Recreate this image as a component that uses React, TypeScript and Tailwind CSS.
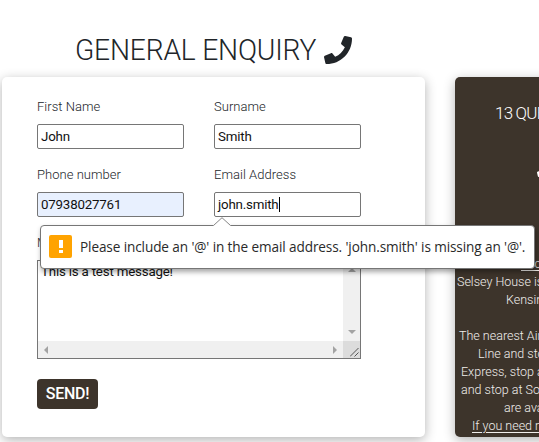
import { FaPhone } from "react-icons/fa";

const travelLines = [
  { text: "Location", indent: "pl-[66px]", underline: true },
  { text: "Selsey House is in", indent: "pl-[2px]", underline: false },
  { text: "Kensington", indent: "pl-[51px]", underline: false },
  { text: "", indent: "pl-0", underline: false },
  { text: "The nearest Airport", indent: "pl-[4px]", underline: false },
  { text: "Line and stop", indent: "pl-[23px]", underline: false },
  { text: "Express, stop at", indent: "pl-[6px]", underline: false },
  { text: "and stop at South", indent: "pl-[6px]", underline: false },
  { text: "are available", indent: "pl-[49px]", underline: false },
  { text: "If you need more", indent: "pl-[17px]", underline: true },
];

function Field({ label, value, filled, focused }: { label: string; value: string; filled?: boolean; focused?: boolean }) {
  return (
    <div className="h-[68px] w-[147px]">
      <div className="h-[27px] text-[13px] leading-5 font-light tracking-[0.03px] text-[#212529]">{label}</div>
      <div className={`flex h-[25px] items-center rounded-[2px] border border-[#767676] pl-[3px] text-[13.333px] tracking-[-0.2px] text-[#111] ${filled ? "bg-[#e8f0fe]" : "bg-white"}`}>
        <span>{value}</span>
        {focused && <span className="h-[15px] w-px bg-black" />}
      </div>
    </div>
  );
}

function MessageBox() {
  return (
    <div className="relative flex h-[99px] w-[324px] flex-col border border-[#767676] bg-white">
      <div className="flex flex-1">
        <div className="flex-1 pt-[3px] pl-[3px] text-[13.333px] leading-4 tracking-[-0.2px] text-[#111]">This is a test message!</div>
        <div className="flex w-[17px] flex-col items-center justify-between bg-[#f0f0f0] pt-[7px] pb-[7px]">
          <svg width="8" height="4" viewBox="0 0 8 4"><path d="M0 4L4 0L8 4Z" fill="#a3a3a3" /></svg>
          <svg width="8" height="4" viewBox="0 0 8 4"><path d="M0 0L4 4L8 0Z" fill="#a3a3a3" /></svg>
        </div>
      </div>
      <div className="flex h-[17px]">
        <div className="flex flex-1 items-center justify-between bg-[#f0f0f0] px-[6px]">
          <svg width="4" height="8" viewBox="0 0 4 8"><path d="M4 0L0 4L4 8Z" fill="#a3a3a3" /></svg>
          <svg width="4" height="8" viewBox="0 0 4 8"><path d="M0 0L4 4L0 8Z" fill="#a3a3a3" /></svg>
        </div>
        <div className="flex w-[17px] items-end justify-end bg-[#dcdcdc] pr-px pb-px">
          <svg width="9" height="9" viewBox="0 0 9 9"><path d="M0 8.5L8.5 0M4.5 8.5L8.5 4.5" stroke="#555" fill="none" /></svg>
        </div>
      </div>
    </div>
  );
}

function ValidationTip() {
  return (
    <div className="absolute top-[225px] left-[40px] z-10 flex h-[44px] w-[495px] items-center rounded-[4px] border border-[#767676] bg-white pl-2 shadow-[1px_3px_5px_rgba(0,0,0,0.35)]">
      <svg className="absolute -top-[9px] left-[172px]" width="18" height="10" viewBox="0 0 18 10">
        <path d="M0 9L9 0.5L18 9V10H0Z" fill="white" />
        <path d="M0.5 8.5L9 0.7L17.5 8.5" fill="none" stroke="#858585" />
      </svg>
      <div className="mb-[2px] flex h-[23px] w-[23px] shrink-0 flex-col items-center justify-center gap-[2px] rounded-[2px] bg-[#ffa300]">
        <span className="h-[8px] w-[4px] bg-white" />
        <span className="h-[3px] w-[4px] bg-white" />
      </div>
      <span className="ml-[8px] whitespace-nowrap font-['Open_Sans','Noto_Sans',sans-serif] text-[13.6px] tracking-[-0.11px] text-[#2a2a2a]">
        Please include an '@' in the email address. 'john.smith' is missing an '@'.
      </span>
    </div>
  );
}

export default function App() {
  return (
    <div className="relative h-[442px] w-[539px] overflow-hidden bg-white font-['Roboto',sans-serif]">
      <header className="flex h-[77px] items-start pt-[32px] pl-[75px] text-[#212529]">
        <h1 className="w-[249px] whitespace-nowrap text-[30px] leading-9 font-light tracking-[-0.2px]">
          <span className="inline-block origin-left scale-x-[0.94]">GENERAL ENQUIRY</span>
        </h1>
        <FaPhone className="mt-[4px] h-[28px] w-[28px]" />
      </header>
      <main className="flex h-[360px] gap-[30px] pl-[2px]">
        <section className="w-[423px] shrink-0 rounded-[5px] bg-white pt-[20px] pl-[35px] shadow-[0_3px_12px_rgba(0,0,0,0.3)]">
          <div className="grid w-[324px] grid-cols-[147px_147px] gap-x-[30px]">
            <Field label="First Name" value="John" />
            <Field label="Surname" value="Smith" />
            <Field label="Phone number" value="07938027761" filled />
            <Field label="Email Address" value="john.smith" focused />
          </div>
          <div className="h-[27px] text-[13px] leading-5 font-light text-[#212529]">Message</div>
          <MessageBox />
          <button className="mt-[20px] flex h-[30px] w-[61px] items-center justify-center rounded-[4px] bg-[#3d342b] text-[16px] font-medium tracking-[-0.3px] text-white">
            SEND!
          </button>
        </section>
        <aside className="w-[423px] shrink-0 rounded-[5px] bg-[#3d342b] text-white shadow-[0_3px_12px_rgba(0,0,0,0.3)]">
          <h2 className="h-[82px] pt-[24px] pl-[40px] text-[17px] leading-6 font-light tracking-[-0.8px]">13 QUEEN'S GATE</h2>
          <FaPhone className="ml-[82px] h-[18px] w-[18px]" />
          <div className="pt-[78px] text-[12.5px] leading-[18px] font-light text-[#f0eeeb]">
            {travelLines.map((line, index) => (
              <div key={index} className={`h-[18px] whitespace-nowrap ${line.indent}`}>
                <span className={line.underline ? "underline underline-offset-2" : ""}>{line.text}</span>
              </div>
            ))}
          </div>
        </aside>
      </main>
      <ValidationTip />
    </div>
  );
}
